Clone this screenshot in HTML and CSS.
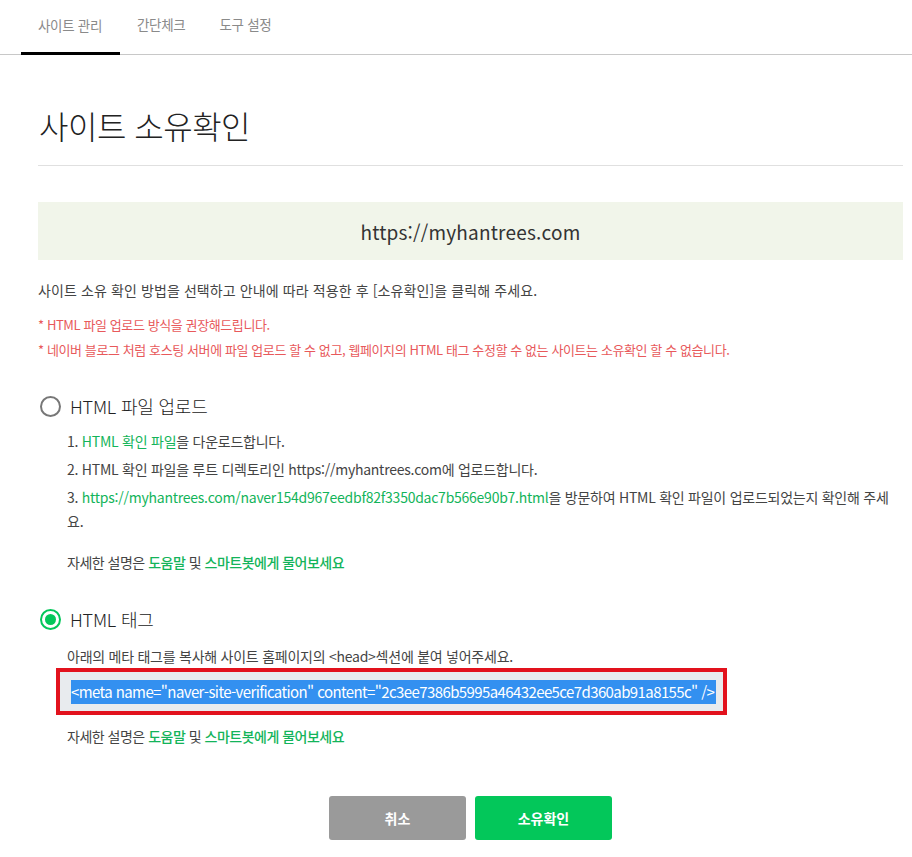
FILE: index.html
```html
<!DOCTYPE html>
<html lang="ko">
<head>
<meta charset="utf-8">
<link rel="stylesheet" href="styles.css">
</head>
<body>
<nav class="tabs">
  <a class="tab active">사이트 관리</a>
  <a class="tab">간단체크</a>
  <a class="tab">도구 설정</a>
</nav>
<main class="page">
  <h1 class="title">사이트 소유확인</h1>
  <div class="site-box">https://myhantrees.com</div>
  <p class="intro">사이트 소유 확인 방법을 선택하고 안내에 따라 적용한 후 [소유확인]을 클릭해 주세요.</p>
  <p class="warn">* HTML 파일 업로드 방식을 권장해드립니다.</p>
  <p class="warn">* 네이버 블로그 처럼 호스팅 서버에 파일 업로드 할 수 없고, 웹페이지의 HTML 태그 수정할 수 없는 사이트는 소유확인 할 수 없습니다.</p>

  <section class="method first">
    <div class="radio-row"><span class="radio"></span><span class="radio-label">HTML 파일 업로드</span></div>
    <div class="method-body steps">
      <p class="step">1. <span class="green">HTML 확인 파일</span>을 다운로드합니다.</p>
      <p class="step">2. HTML 확인 파일을 루트 디렉토리인 https://myhantrees.com에 업로드합니다.</p>
      <p class="step">3. <span class="green">https://myhantrees.com/naver154d967eedbf82f3350dac7b566e90b7.html</span>을 방문하여 HTML 확인 파일이 업로드되었는지 확인해 주세요.</p>
      <p class="help">자세한 설명은 <span class="green">도움말</span> 및 <span class="green">스마트봇에게 물어보세요</span></p>
    </div>
  </section>

  <section class="method second">
    <div class="radio-row"><span class="radio checked"></span><span class="radio-label">HTML 태그</span></div>
    <div class="method-body steps">
      <p class="step">아래의 메타 태그를 복사해 사이트 홈페이지의 &lt;head&gt;섹션에 붙여 넣어주세요.</p>
    </div>
    <div class="meta-box"><span class="meta-sel">&lt;meta name="naver-site-verification" content="2c3ee7386b5995a46432ee5ce7d360ab91a8155c" /&gt;</span></div>
    <div class="method-body">
      <p class="help tight">자세한 설명은 <span class="green">도움말</span> 및 <span class="green">스마트봇에게 물어보세요</span></p>
    </div>
  </section>

  <div class="actions">
    <button class="btn cancel">취소</button>
    <button class="btn confirm">소유확인</button>
  </div>
</main>
</body>
</html>
```

FILE: styles.css
```css
* { box-sizing: border-box; }
body {
  margin: 0;
  font-family: "Noto Sans CJK KR", "Noto Sans", sans-serif;
  color: #333;
  background: #fff;
}
p { margin: 0; }

.tabs {
  display: flex;
  height: 55px;
  padding-left: 21px;
  border-bottom: 1px solid #c8c8c8;
}
.tab {
  display: flex;
  align-items: center;
  padding: 0 17px 6px;
  font-size: 13.5px;
  color: #8a8a8a;
  letter-spacing: -0.3px;
}
.tab.active {
  border-bottom: 3px solid #000;
  margin-bottom: -1px;
  padding-top: 3px;
  width: 99px;
}

.page {
  padding: 0 9px 0 38px;
}
.title {
  margin: 0;
  padding: 47px 0 17px 1px;
  font-size: 32px;
  font-weight: 300;
  line-height: 46px;
  color: #222;
  letter-spacing: -0.5px;
  border-bottom: 1px solid #e0e0e0;
}
.site-box {
  margin-top: 36px;
  height: 58px;
  display: flex;
  align-items: center;
  justify-content: center;
  background: #f1f5ea;
  font-size: 19px;
  color: #333;
  letter-spacing: 0.2px;
}
.intro {
  margin-top: 20px;
  font-size: 14px;
  line-height: 20px;
  color: #444;
  letter-spacing: 0.1px;
}
.warn {
  font-size: 13px;
  line-height: 20px;
  color: #e8595b;
  letter-spacing: -0.4px;
}
.intro + .warn { margin-top: 15px; }
.warn + .warn { margin-top: 5px; }

.method.first { margin-top: 34px; }
.method.second { margin-top: 33px; }
.radio-row {
  display: flex;
  align-items: center;
  margin-left: 2px;
  height: 24px;
}
.radio {
  width: 21px;
  height: 21px;
  border-radius: 50%;
  border: 2px solid #777;
  display: flex;
  align-items: center;
  justify-content: center;
}
.radio.checked {
  border: 2px solid #03c75a;
}
.radio.checked::after {
  content: "";
  width: 11px;
  height: 11px;
  border-radius: 50%;
  background: #03c75a;
}
.radio-label {
  margin-left: 9px;
  font-size: 18px;
  font-weight: 300;
  color: #222;
  letter-spacing: -0.2px;
}
.method-body {
  padding-left: 29px;
  padding-right: 10px;
}
.method-body.steps { margin-top: 11px; }
.method.second .method-body.steps { margin-top: 13px; }
.step {
  font-size: 14px;
  line-height: 24px;
  color: #444;
  letter-spacing: -0.25px;
}
.step + .step { margin-top: 4px; }
.green { color: #13b45a; }
.help {
  margin-top: 17px;
  font-size: 14px;
  line-height: 24px;
  color: #444;
  letter-spacing: -0.5px;
}
.help .green { font-weight: 500; }
.help.tight { margin-top: 9px; }

.meta-box {
  margin: 0 0 0 18px;
  width: 671px;
  height: 47px;
  border: 4px solid #e2121d;
  background: #e8ebee;
  padding: 7px 7px 0 11px;
  overflow: hidden;
  white-space: nowrap;
}
.meta-sel {
  display: inline-block;
  background: #3390f0;
  color: #fff;
  font-size: 15px;
  line-height: 24px;
  letter-spacing: -0.6px;
  padding-right: 2px;
}

.actions {
  display: flex;
  justify-content: center;
  gap: 9px;
  margin-top: 48px;
}
.btn {
  width: 137px;
  height: 44px;
  border: 0;
  border-radius: 3px;
  color: #fff;
  font-family: "Noto Sans CJK KR", sans-serif;
  font-size: 14px;
  font-weight: 700;
}
.btn.cancel { background: #9a9a9a; }
.btn.confirm { background: #03c75a; }
```
